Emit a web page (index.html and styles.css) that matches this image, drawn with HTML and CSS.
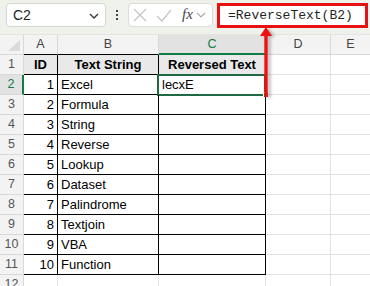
FILE: index.html
```html
<!DOCTYPE html>
<html>
<head>
<meta charset="utf-8">
<link rel="stylesheet" href="styles.css">
</head>
<body>
<div class="topbar">
  <div class="namebox">
    <span class="cellref">C2</span>
    <svg class="chev" width="10" height="6" viewBox="0 0 10 6"><polyline points="1,1 5,5 9,1" fill="none" stroke="#333" stroke-width="1.3"/></svg>
  </div>
  <div class="dots"><i></i><i></i><i></i></div>
  <div class="fbtns">
    <svg width="14" height="14" viewBox="0 0 14 14"><path d="M1 1 L13 13 M13 1 L1 13" stroke="#c4c4c4" stroke-width="1.2" fill="none"/></svg>
    <svg width="16" height="13" viewBox="0 0 16 13"><polyline points="1,7 6,12 15,1" stroke="#c4c4c4" stroke-width="1.2" fill="none"/></svg>
    <span class="fx">fx</span>
    <svg class="chev2" width="10" height="6" viewBox="0 0 10 6"><polyline points="1,1 5,5 9,1" fill="none" stroke="#aaa" stroke-width="1.2"/></svg>
  </div>
  <div class="formula">=ReverseText(B2)</div>
</div>

<div class="sheet">
  <div class="c h corner"><span class="tri"></span></div>
  <div class="c h bt">A</div>
  <div class="c h bt">B</div>
  <div class="c h bt selh">C</div>
  <div class="c h">D</div>
  <div class="c h">E</div>

  <div class="c h rh">1</div>
  <div class="c t th">ID</div>
  <div class="c t th">Text String</div>
  <div class="c t th">Reversed Text</div>
  <div class="c"></div><div class="c"></div>

  <div class="c h rh selr">2</div>
  <div class="c t num">1</div>
  <div class="c t">Excel</div>
  <div class="c t sel">lecxE<span class="selbox"></span><span class="handle"></span></div>
  <div class="c"></div><div class="c"></div>

  <div class="c h rh">3</div>
  <div class="c t num">2</div>
  <div class="c t">Formula</div>
  <div class="c t"></div>
  <div class="c"></div><div class="c"></div>

  <div class="c h rh">4</div>
  <div class="c t num">3</div>
  <div class="c t">String</div>
  <div class="c t"></div>
  <div class="c"></div><div class="c"></div>

  <div class="c h rh">5</div>
  <div class="c t num">4</div>
  <div class="c t">Reverse</div>
  <div class="c t"></div>
  <div class="c"></div><div class="c"></div>

  <div class="c h rh">6</div>
  <div class="c t num">5</div>
  <div class="c t">Lookup</div>
  <div class="c t"></div>
  <div class="c"></div><div class="c"></div>

  <div class="c h rh">7</div>
  <div class="c t num">6</div>
  <div class="c t">Dataset</div>
  <div class="c t"></div>
  <div class="c"></div><div class="c"></div>

  <div class="c h rh">8</div>
  <div class="c t num">7</div>
  <div class="c t">Palindrome</div>
  <div class="c t"></div>
  <div class="c"></div><div class="c"></div>

  <div class="c h rh">9</div>
  <div class="c t num">8</div>
  <div class="c t">Textjoin</div>
  <div class="c t"></div>
  <div class="c"></div><div class="c"></div>

  <div class="c h rh">10</div>
  <div class="c t num">9</div>
  <div class="c t">VBA</div>
  <div class="c t"></div>
  <div class="c"></div><div class="c"></div>

  <div class="c h rh">11</div>
  <div class="c t num">10</div>
  <div class="c t">Function</div>
  <div class="c t"></div>
  <div class="c"></div><div class="c"></div>

  <div class="c h rh">12</div>
  <div class="c"></div><div class="c"></div><div class="c"></div><div class="c"></div><div class="c"></div>
</div>

<svg class="arrow" width="16" height="72" viewBox="0 0 16 72">
  <polygon points="8,0 14,9 2,9" fill="#ee1111"/>
  <rect x="6.3" y="8" width="3.4" height="62" fill="#ee1111"/>
</svg>
</body>
</html>
```

FILE: styles.css
```css
* { box-sizing: border-box; }
html, body { margin: 0; padding: 0; background: #fff; overflow: hidden; }
body { width: 370px; height: 286px; position: relative; font-family: "Liberation Sans", Arial, sans-serif; }

.topbar {
  height: 35px;
  background: #eef2ea;
  display: flex;
  align-items: flex-start;
  padding-top: 3px;
  border-bottom: 1px solid #e4e4e4;
}
.namebox {
  margin-left: 6px;
  width: 100px;
  height: 24px;
  background: #fff;
  border: 1px solid #d6d6d6;
  border-radius: 4px;
  display: flex;
  align-items: center;
  justify-content: space-between;
  padding: 0 6px 0 6px;
}
.cellref { font-size: 14px; color: #1f1f1f; }
.chev { margin-top: 1px; }
.dots {
  width: 22px;
  height: 24px;
  display: flex;
  flex-direction: column;
  align-items: center;
  justify-content: center;
  gap: 2px;
}
.dots i { display: block; width: 2px; height: 2px; background: #444; }
.fbtns {
  width: 85px;
  height: 24px;
  background: #fff;
  border: 1px solid #dcdcdc;
  border-radius: 4px;
  display: flex;
  align-items: center;
  padding-left: 4px;
  gap: 9px;
}
.fx { font-family: "Liberation Serif", serif; font-style: italic; font-size: 15px; color: #444; margin-left: 1px; margin-top: -2px; }
.chev2 { margin-left: -6px; }
.formula {
  margin-left: 4px;
  width: 151px;
  height: 25px;
  border: 3px solid #e81010;
  background: #fff;
  font-family: "Liberation Mono", monospace;
  font-size: 13px;
  line-height: 19px;
  color: #1f1f1f;
  padding-left: 8px;
  white-space: nowrap;
}

.sheet {
  display: grid;
  grid-template-columns: 24px 34px 101px 107px 65px 40px;
  grid-auto-rows: 20px;
}
.c {
  border-right: 1px solid #e1e1e1;
  border-bottom: 1px solid #e1e1e1;
  font-size: 13px;
  line-height: 19px;
  padding: 0 3px;
  white-space: nowrap;
  color: #000;
  position: relative;
}
.h {
  background: #f3f3f3;
  color: #444;
  text-align: center;
  font-size: 12.5px;
  border-right-color: #d9d9d9;
  border-bottom-color: #d9d9d9;
  padding: 0;
}
.corner { position: relative; }
.tri {
  position: absolute;
  right: 3px;
  bottom: 3px;
  width: 0; height: 0;
  border-left: 12px solid transparent;
  border-bottom: 11px solid #dadada;
}
.bt { border-bottom-color: #000; }
.selh { color: #107c41; background: #e2e2e2; border-bottom: 2px solid #107c41; }
.rh { color: #555; }
.selr { color: #107c41; background: #e2e2e2; border-right: 2px solid #107c41; }
.t { border-right-color: #000; border-bottom-color: #000; }
.th { background: #e9e9e9; font-weight: bold; text-align: center; }
.num { text-align: right; }
.selbox {
  position: absolute;
  left: -2px; top: -1px; right: -1px; bottom: -2px;
  border: 2px solid #1e6b43;
}
.handle {
  position: absolute;
  right: -4px; bottom: -4px;
  width: 6px; height: 6px;
  background: #1e6b43;
  border: 1px solid #fff;
}
.arrow {
  position: absolute;
  left: 258px;
  top: 27px;
  filter: drop-shadow(3px 1px 1.5px rgba(0,0,0,0.25));
}
```
